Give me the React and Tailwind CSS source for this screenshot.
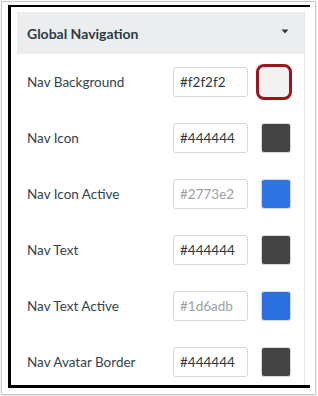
const ROWS = [
  { label: 'Nav Background', value: '#f2f2f2', color: '#f2f2f2', focused: true },
  { label: 'Nav Icon', value: '#444444', color: '#444444' },
  { label: 'Nav Icon Active', value: '#2773e2', color: '#2f74e3', placeholder: true },
  { label: 'Nav Text', value: '#444444', color: '#444444' },
  { label: 'Nav Text Active', value: '#1d6adb', color: '#2b6ee0', placeholder: true },
  { label: 'Nav Avatar Border', value: '#444444', color: '#444444' },
]

function Swatch({ color, focused }) {
  if (focused) {
    return (
      <div
        className="w-[36px] h-[36px] -ml-[5px] -mr-[1px] rounded-[8px] border-[3px] border-[#a0141b] shrink-0"
        style={{ backgroundColor: color }}
      />
    )
  }
  return (
    <div
      className="w-[30px] h-[30px] rounded-[3px] border border-[#d6d9db] shrink-0"
      style={{ backgroundColor: color }}
    />
  )
}

function Row({ row }) {
  return (
    <div className="h-[56px] shrink-0 flex items-center justify-between pl-[10px] pr-[13px]">
      <span className="text-[13.5px] text-[#34444f]">{row.label}</span>
      <div className="flex items-center gap-[13px]">
        <div
          className={
            'w-[75px] h-[30px] rounded-[3px] border border-[#d5d9dc] bg-white flex items-center pl-[6px] text-[13.5px] ' +
            (row.placeholder ? 'text-[#9aa1a6]' : 'text-[#2d3b45]')
          }
        >
          {row.value}
        </div>
        <Swatch color={row.color} focused={row.focused} />
      </div>
    </div>
  )
}

export default function App() {
  return (
    <div className="w-[318px] h-[396px] bg-white relative font-['Lato','Liberation_Sans',sans-serif]">
      {/* screenshot frame */}
      <div className="absolute left-[1px] top-[1px] w-[315px] h-[394px] border border-[#c8c8c8] shadow-sm pointer-events-none" />

      {/* black annotation frame */}
      <div className="ml-[8px] pt-[5px]">
        <div className="w-[302px] h-[383px] border-l-[3px] border-t-[2px] border-b-[3px] border-black overflow-hidden pl-[6px] pt-[5px]">
          <div className="w-[288px] h-full border-r border-[#e4e6e8] flex flex-col">
            {/* header */}
            <div className="h-[42px] shrink-0 bg-[#ebedee] flex items-center justify-between pl-[10px] pr-[15px]">
              <span className="text-[14px] font-bold text-[#2d3b45]">Global Navigation</span>
              <svg width="8" height="5" viewBox="0 0 8 5" className="-mt-[3px]">
                <path d="M0.5 0.5 L7.5 0.5 L4 4.5 Z" fill="#2d3b45" />
              </svg>
            </div>
            {ROWS.map(r => (
              <Row key={r.label} row={r} />
            ))}
          </div>
        </div>
      </div>
    </div>
  )
}
